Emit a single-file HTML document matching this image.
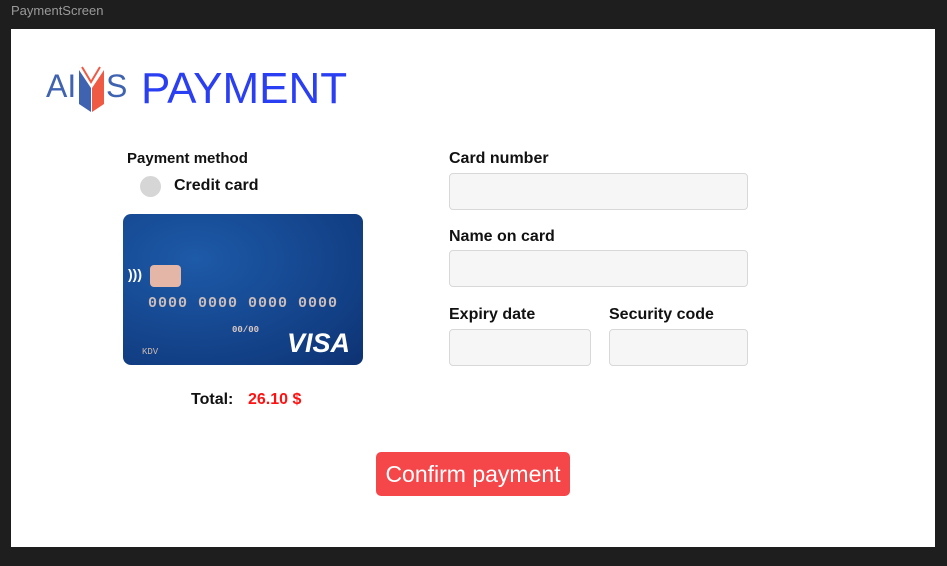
<!DOCTYPE html>
<html><head><style>
body{margin:0;width:947px;height:566px;background:#1e1e1e;position:relative;overflow:hidden;font-family:"Liberation Sans",sans-serif}
.t{position:absolute;left:11px;top:3px;font-size:13px;color:#9a9a9a}
.p{position:absolute;left:11px;top:29px;width:924px;height:518px;background:#fff}
.a{position:absolute}
.lbl{position:absolute;font-size:16px;font-weight:bold;color:#111}
.in{position:absolute;background:#f6f6f6;border:1px solid #d8d8d8;border-radius:4px;box-sizing:border-box}
</style></head><body>
<div class="t">PaymentScreen</div>
<div class="p"></div>
<div class="a" style="left:46px;top:68px;font-size:32px;color:#3f63b0">AI</div>
<svg class="a" style="left:78px;top:66px" width="28" height="48" viewBox="0 0 28 48">
<polygon points="1,4 13,22 13,46 1,38" fill="#3f63b0"/>
<polygon points="26,4 14,22 14,46 26,38" fill="#ef5a45"/>
<polyline points="4,1 13,16 22,1" fill="none" stroke="#ef5a45" stroke-width="2"/>
</svg>
<div class="a" style="left:106px;top:68px;font-size:32px;color:#3f63b0">S</div>
<div class="a" style="left:141px;top:64px;font-size:44px;color:#2b3ff2">PAYMENT</div>
<div class="lbl" style="left:127px;top:150px;font-size:15px">Payment method</div>
<div class="a" style="left:140px;top:176px;width:21px;height:21px;border-radius:50%;background:#d6d6d6"></div>
<div class="lbl" style="left:174px;top:177px;font-size:16px">Credit card</div>
<div class="a" style="left:123px;top:214px;width:240px;height:151px;border-radius:8px;background:radial-gradient(ellipse at 30% 30%,#1d5aa8,#123f85 70%,#0e3272)"></div>
<div class="a" style="left:128px;top:266px;color:#fff;font-size:14px;font-weight:bold">)))</div>
<div class="a" style="left:150px;top:265px;width:31px;height:22px;border-radius:4px;background:#e3b6a8"></div>
<div class="a" style="left:148px;top:295px;color:#cbbdba;font-family:'Liberation Mono',monospace;font-size:15px;font-weight:bold;letter-spacing:1px">0000 0000 0000 0000</div>
<div class="a" style="left:232px;top:325px;color:#d8c7c3;font-family:'Liberation Mono',monospace;font-size:9px;font-weight:bold">00/00</div>
<div class="a" style="left:142px;top:347px;color:#c8b8b0;font-family:'Liberation Mono',monospace;font-size:9px">KDV</div>
<div class="a" style="left:287px;top:328px;color:#fff;font-size:27px;font-weight:bold;font-style:italic">VISA</div>
<div class="lbl" style="left:191px;top:391px;font-size:16px">Total:</div>
<div class="lbl" style="left:248px;top:391px;font-size:16px;color:#f11">26.10 $</div>
<div class="lbl" style="left:449px;top:150px">Card number</div>
<div class="in" style="left:449px;top:173px;width:299px;height:37px"></div>
<div class="lbl" style="left:449px;top:228px">Name on card</div>
<div class="in" style="left:449px;top:250px;width:299px;height:37px"></div>
<div class="lbl" style="left:449px;top:306px">Expiry date</div>
<div class="in" style="left:449px;top:329px;width:142px;height:37px"></div>
<div class="lbl" style="left:609px;top:306px">Security code</div>
<div class="in" style="left:609px;top:329px;width:139px;height:37px"></div>
<div class="a" style="left:376px;top:452px;width:194px;height:44px;border-radius:5px;background:#f5474a;color:#fff;font-size:23px;line-height:44px;text-align:center">Confirm payment</div>
</body></html>
